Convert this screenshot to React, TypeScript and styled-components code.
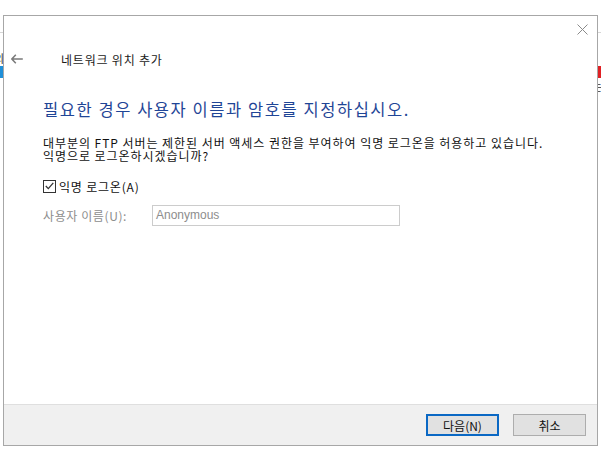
import React from 'react'
import styled, { createGlobalStyle } from 'styled-components'

const GlobalStyle = createGlobalStyle`
  html, body {
    margin: 0;
    padding: 0;
    background: #ffffff;
  }
  body {
    font-family: 'Noto Sans CJK KR', 'Noto Sans', sans-serif;
  }
`

const App = () => {
    return (
        <>
            <GlobalStyle />
            <Desktop>
                <SideStrip>
                    <StripLine />
                    <StripGlyph top={19}>외</StripGlyph>
                    <StripBar color="#1f8fd8" top={2} />
                </SideStrip>
                <Window>
                    <CloseRow>
                        <CloseButton aria-label="닫기">
                            <svg width="11" height="11" viewBox="0 0 11 11">
                                <path d="M0.5 0.5 L10.5 10.5 M10.5 0.5 L0.5 10.5" stroke="#8a8a8a" strokeWidth="1" fill="none" />
                            </svg>
                        </CloseButton>
                    </CloseRow>
                    <HeaderRow>
                        <BackButton aria-label="뒤로">
                            <svg width="12" height="10" viewBox="0 0 12 10">
                                <path d="M4.8 0.8 L0.9 5 L4.8 9.2 M0.9 5 L11.8 5" stroke="#7a7a7a" strokeWidth="1.5" fill="none" />
                            </svg>
                        </BackButton>
                        <Title>네트워크 위치 추가</Title>
                    </HeaderRow>
                    <Content>
                        <Instruction>필요한 경우 사용자 이름과 암호를 지정하십시오.</Instruction>
                        <Paragraph>
                            <Line>대부분의 FTP 서버는 제한된 서버 액세스 권한을 부여하여 익명 로그온을 허용하고 있습니다.</Line>
                            <Line>익명으로 로그온하시겠습니까?</Line>
                        </Paragraph>
                        <CheckRow>
                            <CheckBox>
                                <svg width="9" height="8" viewBox="0 0 9 8">
                                    <path d="M0.8 4 L3.3 6.6 L8.3 0.8" stroke="#333" strokeWidth="1.3" fill="none" />
                                </svg>
                            </CheckBox>
                            <CheckLabel>익명 로그온(A)</CheckLabel>
                        </CheckRow>
                        <FieldRow>
                            <FieldLabel>사용자 이름(U):</FieldLabel>
                            <TextBox>Anonymous</TextBox>
                        </FieldRow>
                    </Content>
                    <Footer>
                        <Button primary>다음(N)</Button>
                        <Button>취소</Button>
                    </Footer>
                </Window>
                <SideStrip>
                    <StripLine />
                    <StripBar color="#e02024" top={33} />
                    <StripGlyph top={2}>는</StripGlyph>
                </SideStrip>
            </Desktop>
        </>
    )
}

const Desktop = styled.div`
  display: flex;
  width: 601px;
  height: 449px;
  overflow: hidden;
  background: #ffffff;
`

const SideStrip = styled.div`
  flex: 1;
  display: flex;
  flex-direction: column;
  overflow: hidden;
  padding-top: 32px;
`

const StripLine = styled.div`
  height: 1px;
  background: #d6d6d6;
`

const StripGlyph = styled.div<{ top: number }>`
  margin-top: ${(p) => p.top}px;
  height: 12px;
  font-size: 11px;
  line-height: 12px;
  color: #333;
  white-space: nowrap;
  text-indent: -6px;
`

const StripBar = styled.div<{ color: string; top: number }>`
  margin-top: ${(p) => p.top}px;
  height: 12px;
  background: ${(p) => p.color};
`

const Window = styled.div`
  width: 595px;
  height: 431px;
  margin-top: 15px;
  box-sizing: border-box;
  border: 1px solid #a7a7a7;
  background: #ffffff;
  display: flex;
  flex-direction: column;
  flex-shrink: 0;
`

const CloseRow = styled.div`
  display: flex;
  justify-content: flex-end;
  padding: 8px 9px 0 0;
  height: 22px;
  box-sizing: border-box;
`

const CloseButton = styled.div`
  width: 11px;
  height: 11px;
  display: flex;
`

const HeaderRow = styled.div`
  display: flex;
  align-items: center;
  height: 22px;
  margin-top: 10px;
`

const BackButton = styled.div`
  width: 12px;
  height: 10px;
  margin-left: 7px;
  display: flex;
`

const Title = styled.div`
  margin-left: 38px;
  font-size: 12px;
  letter-spacing: 0.8px;
  color: #1a1a1a;
`

const Content = styled.div`
  flex: 1;
  padding: 28px 0 0 39px;
  display: flex;
  flex-direction: column;
`

const Instruction = styled.div`
  font-size: 16.5px;
  line-height: 22px;
  color: #1f4596;
  letter-spacing: 1.55px;
`

const Paragraph = styled.div`
  margin-top: 16px;
  font-size: 12px;
  color: #111;
  letter-spacing: 0.95px;
`

const Line = styled.div`
  height: 13px;
  line-height: 13px;
  white-space: nowrap;
`

const CheckRow = styled.div`
  display: flex;
  align-items: center;
  margin-top: 17px;
  height: 14px;
`

const CheckBox = styled.div`
  width: 11px;
  height: 11px;
  border: 1px solid #333;
  display: flex;
  align-items: center;
  justify-content: center;
  box-sizing: content-box;
`

const CheckLabel = styled.span`
  margin-left: 3px;
  font-size: 12px;
  letter-spacing: 0.8px;
  color: #111;
`

const FieldRow = styled.div`
  display: flex;
  align-items: center;
  margin-top: 12px;
`

const FieldLabel = styled.span`
  width: 109px;
  font-size: 12px;
  letter-spacing: 0.6px;
  color: #8d8d8d;
`

const TextBox = styled.div`
  width: 248px;
  height: 21px;
  box-sizing: border-box;
  border: 1px solid #cccccc;
  padding-left: 3px;
  font-family: 'Liberation Sans', Arial, sans-serif;
  font-size: 12px;
  line-height: 19px;
  color: #8d8d8d;
`

const Footer = styled.div`
  height: 41px;
  box-sizing: border-box;
  border-top: 1px solid #dfdfdf;
  background: #f0f0f0;
  display: flex;
  align-items: center;
  justify-content: flex-end;
  gap: 14px;
  padding-right: 11px;
`

const Button = styled.div<{ primary?: boolean }>`
  width: 73px;
  height: 22px;
  box-sizing: border-box;
  border: ${(p) => (p.primary ? '2px solid #0a68c4' : '1px solid #adadad')};
  background: #e1e1e1;
  display: flex;
  align-items: center;
  justify-content: center;
  font-size: 12px;
  color: #111;
`

export default App
